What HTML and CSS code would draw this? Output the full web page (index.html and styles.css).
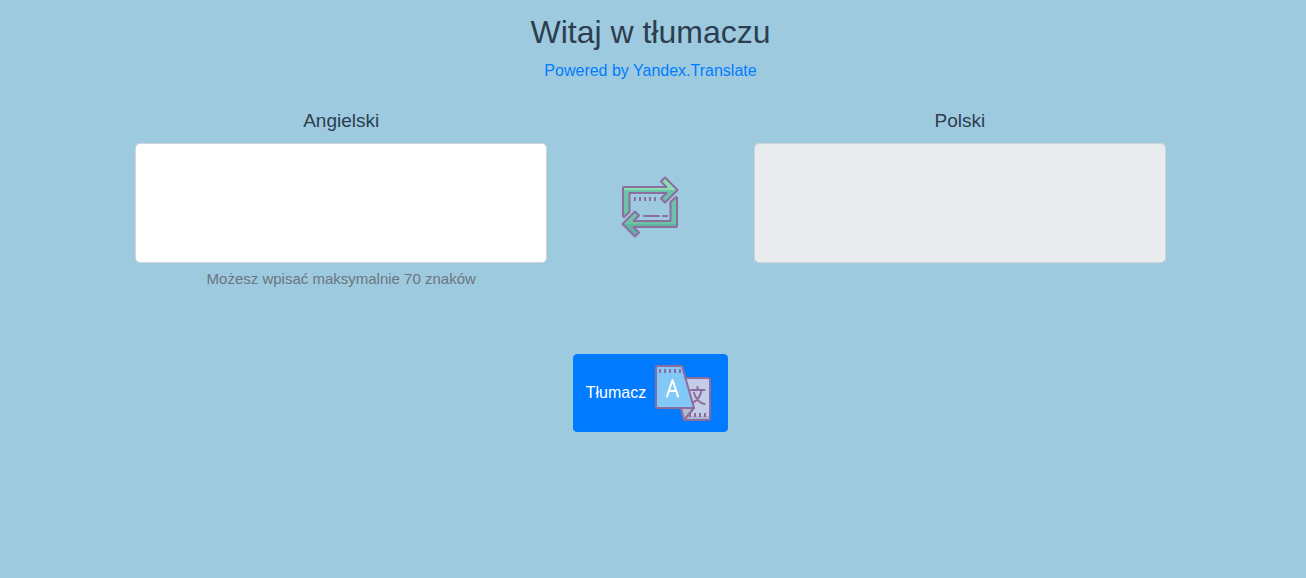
FILE: index.html
```html
<!DOCTYPE html>
<html lang="pl">
<head>
<meta charset="utf-8">
<meta name="viewport" content="width=device-width, initial-scale=1">
<title>Witaj w tłumaczu</title>
<link rel="stylesheet" href="styles.css">
</head>
<body>
<main class="app">
  <header class="header">
    <h1 class="title">Witaj w tłumaczu</h1>
    <a class="powered" href="#">Powered by Yandex.Translate</a>
  </header>
  <form class="form">
    <div class="languages">
      <div class="field">
        <label class="label" for="source">Angielski</label>
        <textarea class="input" id="source" maxlength="70" aria-describedby="hint"></textarea>
        <small class="hint" id="hint">Możesz wpisać maksymalnie 70 znaków</small>
      </div>
      <button class="swap" type="button" aria-label="Zamień języki">
        <svg class="icon" viewBox="0 0 64 64" fill="none" stroke-linejoin="round" stroke-linecap="round">
          <path fill="#6cc3a8" d="M5 12H48.500L43 6.500 47 2.500 59.500 15 47 27.500 43 23.500 48.500 18H11.500V37L5 42Z"/>
          <path fill="#8be0b4" d="M5 12H48.500L43 6.500 47 2.500 59.500 15H5Z"/>
          <path stroke="#8d6c9f" stroke-width="2" d="M6 12H48.500L43 6.500 47 2.500 59.500 15 47 27.500 43 23.500 48.500 18H11.500V37L6 42Q5 42 5 41V13Q5 12 6 12Z"/>
          <path fill="#6cc3a8" d="M59 52H15.500L21 57.500 17 61.500 4.500 49 17 36.500 21 40.500 15.500 46H52.500V27L59 22Z"/>
          <path fill="#5fb69f" d="M59 52H15.500L21 57.500 17 61.500 4.500 49H59Z"/>
          <path stroke="#8d6c9f" stroke-width="2" d="M58 52H15.500L21 57.500 17 61.500 4.500 49 17 36.500 21 40.500 15.500 46H52.500V27L58 22Q59 22 59 23V51Q59 52 58 52Z"/>
          <path stroke="#8d6c9f" stroke-width="2" stroke-linecap="butt" d="M17 22v4M22 22v4M27 22v4M32 22v4M37 22v4"/>
          <path stroke="#8d6c9f" stroke-width="2" d="M26 41H41M45 41H49"/>
        </svg>
      </button>
      <div class="field">
        <label class="label" for="target">Polski</label>
        <textarea class="input input-readonly" id="target" readonly></textarea>
      </div>
    </div>
    <button class="submit" type="button">
      <span>Tłumacz</span>
      <svg class="icon" viewBox="0 0 64 64" fill="none" stroke-linejoin="round" stroke-linecap="round" aria-hidden="true">
        <path fill="#c3cde7" stroke="#8d6c9f" stroke-width="2" d="M30 17H57Q59 17 59 19V57Q59 59 57 59H33L30 47Z"/>
        <path fill="#acb7d0" d="M34 58V55H58V57L57 58Z"/>
        <g stroke="#8d6c9f" stroke-width="2">
          <path d="M46.500 26V29M40 29H53.500M50.500 29.500C49.500 35 46 40 41 42M43 32C45 38 48 42 53.500 43"/>
          <path stroke-linecap="butt" d="M39 52v4M44 52v4M49 52v4M54 52v4"/>
          <path fill="#b1bccf" d="M30 47H43L33 59Z"/>
          <path fill="#83c9f8" d="M7 5H31L43 47H7Q5 47 5 45V7Q5 5 7 5Z"/>
          <path stroke-linecap="butt" d="M9 8v4M14 8v4M19 8v4M24 8v4M29 8v4"/>
        </g>
        <path stroke="#fff" stroke-width="2" d="M16 35.500L21.500 19 27 35.500M18 30H25"/>
      </svg>
    </button>
  </form>
</main>
</body>
</html>
```
FILE: styles.css
```css
*, *::before, *::after {
  box-sizing: border-box;
}

body {
  margin: 0;
  min-height: 100vh;
  background: #9ecadf;
  color: #2c3e50;
  font-family: "Liberation Sans", Arial, sans-serif;
  font-size: 16px;
  line-height: 24px;
  text-align: center;
}

.app {
  padding: 13px 5px 0 0;
}

.title {
  margin: 0 0 8px;
  font-size: 32px;
  font-weight: 400;
  line-height: 38px;
}

.powered {
  color: #007bff;
  text-decoration: none;
}

.form {
  display: flex;
  flex-direction: column;
  align-items: center;
  gap: 63px;
  margin-top: 23px;
}

.languages {
  display: grid;
  grid-template-columns: 2fr 1fr 2fr;
  align-items: start;
  width: 100%;
  padding: 0 135px;
}

.field {
  display: flex;
  flex-direction: column;
}

.label {
  margin-bottom: 8px;
  font-size: 19px;
  line-height: 29px;
}

.input {
  width: 100%;
  height: 120px;
  padding: 6px 12px;
  border: 1px solid #ced4da;
  border-radius: 5px;
  background: #fff;
  color: #495057;
  font: inherit;
  resize: none;
}

.input-readonly {
  background: #e9ecef;
}

.hint {
  margin-top: 4px;
  color: #6c757d;
  font-size: 15px;
}

.swap {
  justify-self: center;
  align-self: center;
  margin-top: 16px;
  padding: 0;
  border: 0;
  background: none;
  cursor: pointer;
}

.icon {
  display: block;
  width: 64px;
  height: 64px;
}

.submit {
  display: flex;
  align-items: center;
  gap: 5px;
  padding: 6px 12px;
  border: 1px solid #007bff;
  border-radius: 4px;
  background: #007bff;
  color: #fff;
  font: inherit;
  cursor: pointer;
}
```
